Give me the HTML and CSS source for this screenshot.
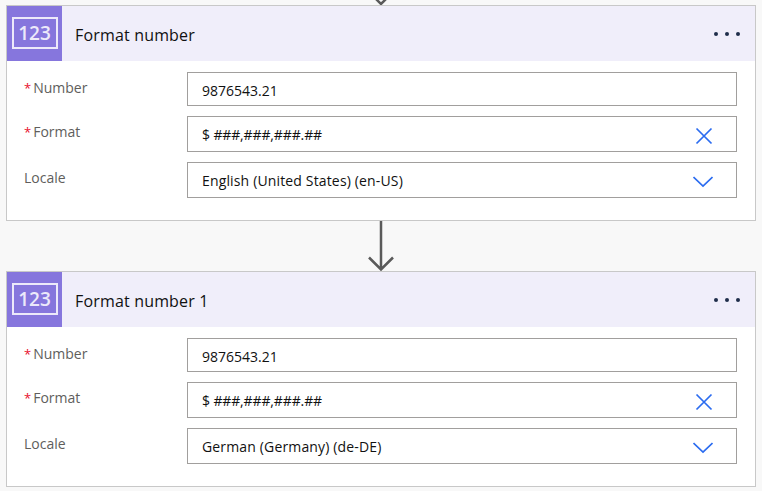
FILE: index.html
```html
<!DOCTYPE html>
<html lang="en">
<head>
<meta charset="utf-8">
<title>Format number</title>
<link rel="stylesheet" href="styles.css">
</head>
<body>
<main class="flow">
  <div class="connector connector-top">
    <svg width="28" height="5" viewBox="0 0 28 5"><path class="arrow" d="M8 -2L14 4 20 -2"/></svg>
  </div>
  <section class="card">
    <header class="card-head">
      <div class="tile">
        <div class="tile-box">123</div>
      </div>
      <h2 class="card-title">Format number</h2>
      <div class="more"><i></i><i></i><i></i></div>
    </header>
    <div class="card-body">
      <div class="row row-short">
        <div class="label"><span class="req">*</span>Number</div>
        <div class="field"><span class="value value-low">9876543.21</span></div>
      </div>
      <div class="row">
        <div class="label"><span class="req">*</span>Format</div>
        <div class="field field-tall"><span class="value value-tight">$ ###,###,###.##</span>
          <svg class="icon icon-x" width="18" height="18" viewBox="0 0 18 18"><path d="M1.500 1.500L16.500 16.500M16.500 1.500L1.500 16.500"/></svg>
        </div>
      </div>
      <div class="row">
        <div class="label">Locale</div>
        <div class="field field-tall"><span class="value value-wide">English (United States) (en-US)</span>
          <svg class="icon icon-chevron" width="20" height="12" viewBox="0 0 20 12"><path d="M0.500 1L10 10 19.500 1"/></svg>
        </div>
      </div>
    </div>
  </section>
  <div class="connector">
    <svg width="28" height="50" viewBox="0 0 28 50"><path class="arrow" d="M2 36.500L14 48.500 26 36.500M14 0V48.500"/></svg>
  </div>
  <section class="card">
    <header class="card-head">
      <div class="tile">
        <div class="tile-box">123</div>
      </div>
      <h2 class="card-title">Format number 1</h2>
      <div class="more"><i></i><i></i><i></i></div>
    </header>
    <div class="card-body">
      <div class="row row-short">
        <div class="label"><span class="req">*</span>Number</div>
        <div class="field"><span class="value value-low">9876543.21</span></div>
      </div>
      <div class="row">
        <div class="label"><span class="req">*</span>Format</div>
        <div class="field field-tall"><span class="value value-tight">$ ###,###,###.##</span>
          <svg class="icon icon-x" width="18" height="18" viewBox="0 0 18 18"><path d="M1.500 1.500L16.500 16.500M16.500 1.500L1.500 16.500"/></svg>
        </div>
      </div>
      <div class="row">
        <div class="label">Locale</div>
        <div class="field field-tall"><span class="value value-wide">German (Germany) (de-DE)</span>
          <svg class="icon icon-chevron" width="20" height="12" viewBox="0 0 20 12"><path d="M0.500 1L10 10 19.500 1"/></svg>
        </div>
      </div>
    </div>
  </section>
</main>
</body>
</html>
```
FILE: styles.css
```css
* { box-sizing: border-box; }
html, body { margin: 0; height: 100%; }
body {
  background: #f8f8f8;
  font-family: "Open Sans", "Noto Sans", sans-serif;
  overflow: hidden;
}
.flow { padding: 0 6px; width: 762px; }
.connector { height: 50px; display: flex; justify-content: center; width: 750px; }
.connector svg { display: block; }
.connector-top { height: 5px; overflow: hidden; }
.arrow { fill: none; stroke: #5a5a5a; stroke-width: 2.500; }
.card {
  width: 750px;
  height: 216px;
  background: #fff;
  border: 1px solid #c8c8c8;
}
.card-head {
  height: 55px;
  background: #f0eefa;
  display: flex;
  align-items: center;
}
.tile {
  width: 55px;
  height: 55px;
  background: #8676dd;
  display: flex;
  align-items: center;
  justify-content: center;
}
.tile-box {
  width: 46px;
  height: 32px;
  margin-top: -1px;
  border: 2px solid #ece9fa;
  color: #ece9fa;
  font-size: 19px;
  font-weight: 600;
  line-height: 28px;
  text-align: center;
}
.card-title {
  margin: 2px 0 0 13px;
  font-size: 16px;
  font-weight: 400;
  letter-spacing: 0.170px;
  color: #111;
  flex: 1;
}
.more { display: flex; gap: 7px; margin-right: 15px; }
.more i { width: 4px; height: 4px; border-radius: 50%; background: #1f2d4a; }
.card-body { padding: 11px 18px 0 17px; display: flex; flex-direction: column; gap: 10px; }
.row { display: flex; align-items: flex-start; }
.label {
  width: 163px;
  font-size: 14px;
  line-height: 18px;
  color: #605e5c;
  padding-top: 7px;
}
.req { color: #e8112d; font-size: 13px; margin-right: 2px; }
.field {
  flex: 1;
  height: 34px;
  border: 1px solid #a19f9d;
  background: #fff;
  padding: 0 14px;
  font-size: 14px;
  color: #111;
  display: flex;
  align-items: center;
  justify-content: space-between;
}
.field-tall { height: 36px; }
.value-low { margin-top: 2px; }
.value-tight { letter-spacing: -0.130px; }
.value-wide { letter-spacing: 0.150px; margin-top: 1px; }
.icon { fill: none; stroke: #2b6cf0; stroke-width: 1.700; margin-right: 9px; }
.icon-x { margin-top: 3px; }
.icon-chevron { margin-top: 3px; }
```
